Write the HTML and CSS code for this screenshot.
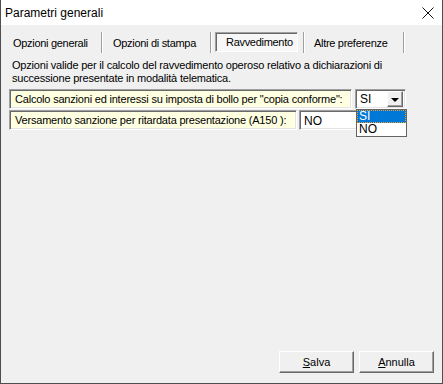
FILE: index.html
```html
<!DOCTYPE html>
<html>
    <head>
        <link rel="stylesheet" href="styles.css">
        <title>Parametri generali</title>
    </head>

    <body>
        <div class="window">
            <div class="title-bar">
                <span class="title-text">Parametri generali</span>
                <svg class="close-icon" width="12" height="12" viewBox="0 0 12 12">
                    <path d="M0.5 0.5 L11.5 11.5 M11.5 0.5 L0.5 11.5" stroke="#111" stroke-width="1" fill="none"/>
                </svg>
            </div>

            <div class="tabs">
                <div class="tab tab-1">Opzioni generali</div>
                <div class="tab-sep"></div>
                <div class="tab tab-2">Opzioni di stampa</div>
                <div class="tab-sep"></div>
                <div class="tab tab-active">Ravvedimento</div>
                <div class="tab-sep"></div>
                <div class="tab tab-4">Altre preferenze</div>
                <div class="tab-sep"></div>
            </div>

            <div class="panel">
                <p class="description">Opzioni valide per il calcolo del ravvedimento operoso relativo a dichiarazioni di successione presentate in modalità telematica.</p>

                <div class="option-row">
                    <div class="option-label label-wide">Calcolo sanzioni ed interessi su imposta di bollo per "copia conforme":</div>
                    <div class="combo">
                        <span class="combo-value">SI</span>
                        <span class="combo-button"><span class="arrow"></span></span>
                        <ul class="combo-list">
                            <li class="combo-item selected">SI</li>
                            <li class="combo-item">NO</li>
                        </ul>
                    </div>
                </div>

                <div class="option-row">
                    <div class="option-label label-short">Versamento sanzione per ritardata presentazione (A150 ):</div>
                    <div class="text-field">NO</div>
                </div>
            </div>

            <div class="footer">
                <button class="btn"><u>S</u>alva</button>
                <button class="btn"><u>A</u>nnulla</button>
            </div>
        </div>
    </body>
</html>
```

FILE: styles.css
```css
html, body {
    margin: 0;
    padding: 0;
}
body {
    background-color: #f0f0f0;
    font-family: "Liberation Sans", Arial, sans-serif;
    font-size: 11px;
    color: #000;
}
.window {
    box-sizing: border-box;
    width: 443px;
    height: 384px;
    border: 1px solid #4f4f4f;
    border-top: none;
    background-color: #f0f0f0;
    display: flex;
    flex-direction: column;
}

/* Title bar */
.title-bar {
    height: 25px;
    background-color: #fff;
    display: flex;
    align-items: center;
    padding-left: 4px;
    padding-right: 8px;
}
.title-text {
    font-size: 12px;
    flex: 1;
}
.close-icon {
    display: block;
}

/* Tabs */
.tabs {
    display: flex;
    align-items: stretch;
    height: 21px;
    margin-top: 7px;
    letter-spacing: -0.3px;
}
.tab {
    display: flex;
    align-items: center;
    box-sizing: border-box;
}
.tab-1 {
    width: 100px;
    padding-left: 12px;
}
.tab-2 {
    width: 107px;
    padding-left: 10px;
}
.tab-active {
    width: 83px;
    height: 20px;
    margin-left: 3px;
    margin-right: 5px;
    padding-left: 10px;
    border: 1px solid #fff;
    border-top-color: #a0a0a0;
    border-left-color: #a0a0a0;
    box-shadow: inset 1px 1px 0 #696969;
    background-color: #f7f7f7;
}
.tab-4 {
    width: 98px;
    padding-left: 9px;
}
.tab-sep {
    width: 1px;
    background-color: #a0a0a0;
    border-right: 1px solid #fff;
}

/* Panel */
.panel {
    padding: 6px 0 0 8px;
}
.description {
    margin: 0 0 0 3px;
    line-height: 13px;
    width: 400px;
    letter-spacing: -0.2px;
}
.option-row {
    display: flex;
    align-items: flex-start;
    margin-top: 1px;
    height: 20px;
}
.description + .option-row {
    margin-top: 4px;
}
.option-label {
    box-sizing: border-box;
    height: 20px;
    background-color: #ffffe1;
    border: 1px solid #fff;
    border-top-color: #a0a0a0;
    border-left-color: #a0a0a0;
    box-shadow: inset 1px 1px 0 #696969, inset -1px -1px 0 #e3e3e3;
    padding: 3px 0 0 5px;
    letter-spacing: -0.2px;
    white-space: nowrap;
}
.label-wide {
    width: 343px;
}
.label-short {
    width: 288px;
}

/* Combo box */
.combo {
    position: relative;
    box-sizing: border-box;
    width: 51px;
    height: 20px;
    margin-left: 3px;
    background-color: #fff;
    border: 1px solid #fff;
    border-top-color: #a0a0a0;
    border-left-color: #a0a0a0;
    box-shadow: inset 1px 1px 0 #696969, inset -1px -1px 0 #e3e3e3;
    display: flex;
    align-items: center;
    padding: 0 2px 0 4px;
}
.combo-value {
    flex: 1;
    font-size: 12px;
}
.combo-button {
    box-sizing: border-box;
    width: 16px;
    height: 16px;
    background-color: #f0f0f0;
    border: 1px solid #696969;
    border-top-color: #fff;
    border-left-color: #fff;
    box-shadow: inset -1px -1px 0 #a0a0a0;
    display: flex;
    align-items: center;
    justify-content: center;
}
.arrow {
    width: 0;
    height: 0;
    border-left: 4px solid transparent;
    border-right: 4px solid transparent;
    border-top: 4px solid #000;
    margin-top: 1px;
}
.combo-list {
    position: absolute;
    top: 19px;
    left: 0;
    width: 51px;
    box-sizing: border-box;
    margin: 0;
    padding: 0;
    list-style: none;
    background-color: #fff;
    border: 1px solid #646464;
    z-index: 10;
}
.combo-item {
    height: 13px;
    line-height: 13px;
    padding-left: 2px;
    font-size: 12px;
}
.combo-item.selected {
    background-color: #0078d7;
    color: #fff;
    outline: 1px dotted #f0a030;
    outline-offset: -1px;
}

/* Text field */
.text-field {
    box-sizing: border-box;
    width: 100px;
    height: 20px;
    margin-left: 2px;
    background-color: #fff;
    border: 1px solid #fff;
    border-top-color: #a0a0a0;
    border-left-color: #a0a0a0;
    box-shadow: inset 1px 1px 0 #696969, inset -1px -1px 0 #e3e3e3;
    padding: 3px 0 0 4px;
    font-size: 12px;
}

/* Footer buttons */
.footer {
    margin-top: auto;
    display: flex;
    justify-content: flex-end;
    gap: 5px;
    padding: 0 8px 10px 0;
}
.btn {
    box-sizing: border-box;
    width: 75px;
    height: 22px;
    font-family: "Liberation Sans", Arial, sans-serif;
    font-size: 11px;
    color: #000;
    background-color: #f0f0f0;
    border: 1px solid #696969;
    border-top-color: #fff;
    border-left-color: #fff;
    box-shadow: inset -1px -1px 0 #a0a0a0;
    padding: 0;
}
```
